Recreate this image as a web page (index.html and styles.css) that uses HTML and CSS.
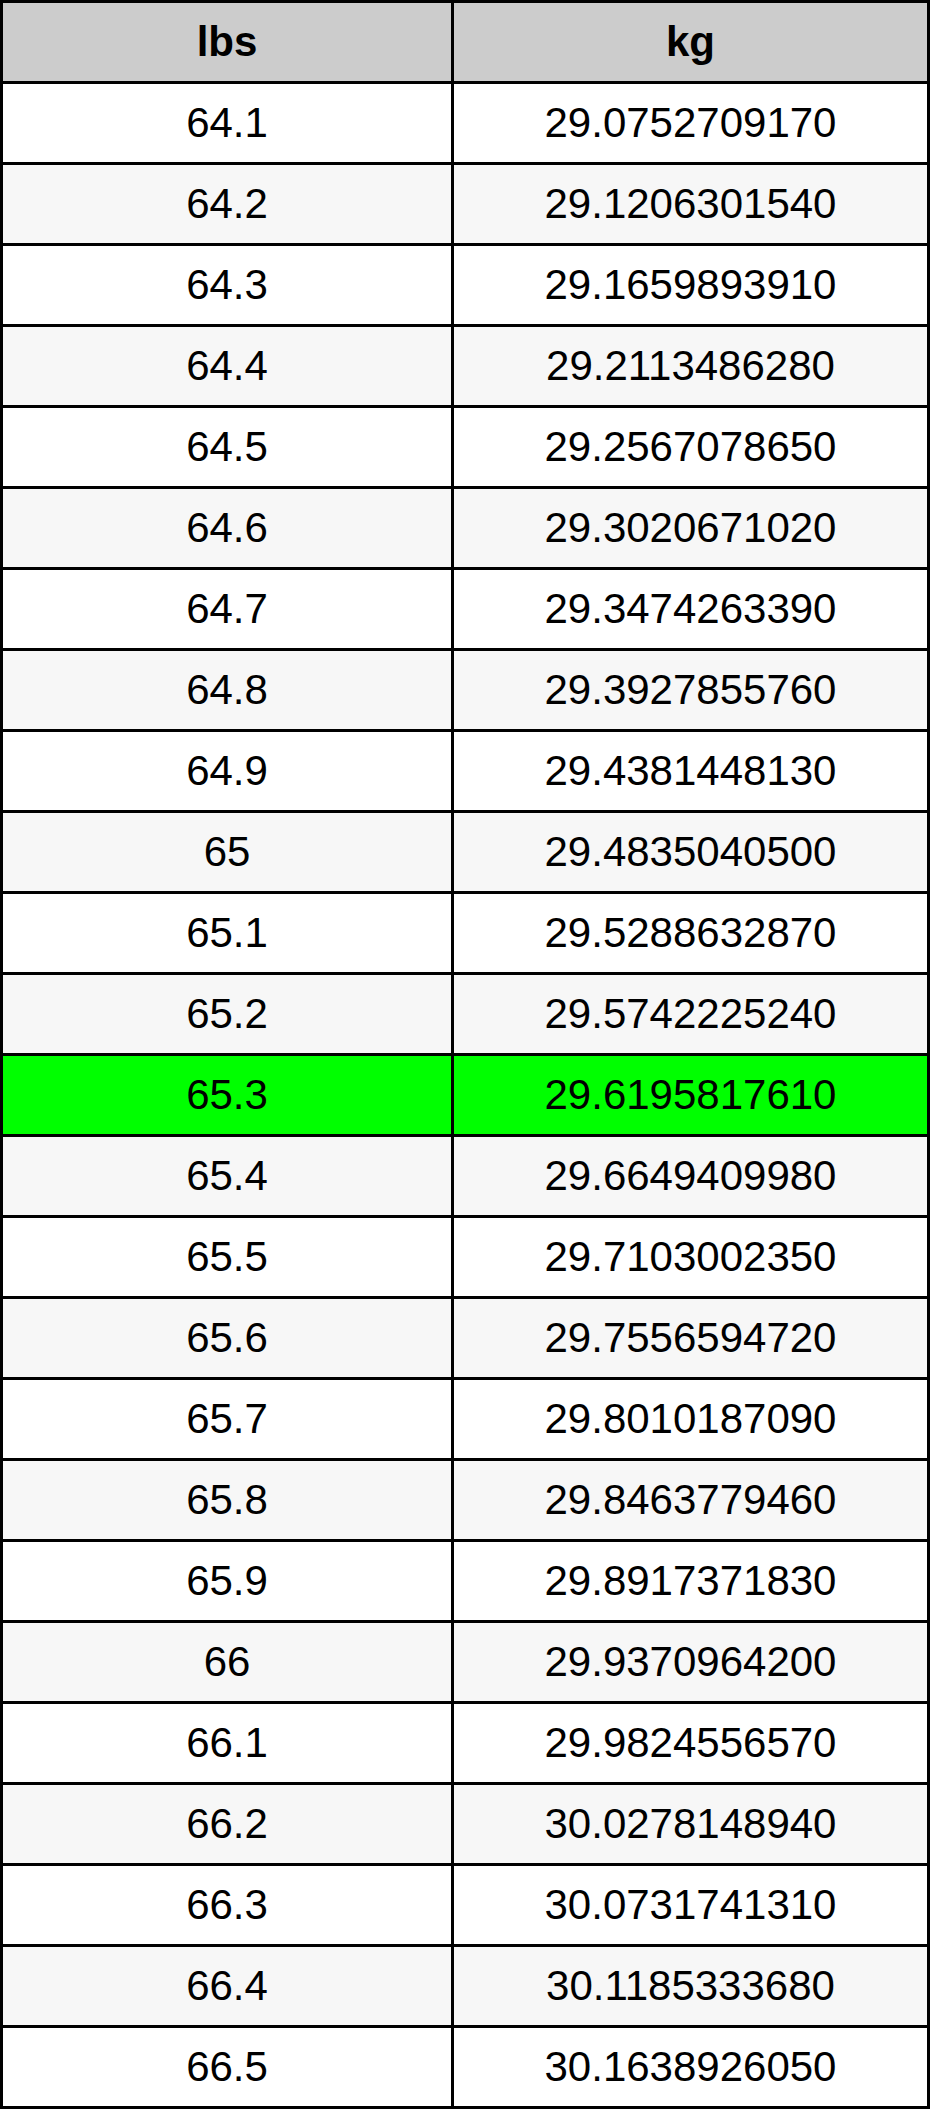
FILE: index.html
```html
<!DOCTYPE html>
<html>
<head>
<meta charset="utf-8">
<link rel="stylesheet" href="styles.css">
</head>
<body>
<table class="conv">
<thead>
<tr><th class="c1">lbs</th><th class="c2">kg</th></tr>
</thead>
<tbody>
<tr><td>64.1</td><td>29.0752709170</td></tr>
<tr><td>64.2</td><td>29.1206301540</td></tr>
<tr><td>64.3</td><td>29.1659893910</td></tr>
<tr><td>64.4</td><td>29.2113486280</td></tr>
<tr><td>64.5</td><td>29.2567078650</td></tr>
<tr><td>64.6</td><td>29.3020671020</td></tr>
<tr><td>64.7</td><td>29.3474263390</td></tr>
<tr><td>64.8</td><td>29.3927855760</td></tr>
<tr><td>64.9</td><td>29.4381448130</td></tr>
<tr><td>65</td><td>29.4835040500</td></tr>
<tr><td>65.1</td><td>29.5288632870</td></tr>
<tr><td>65.2</td><td>29.5742225240</td></tr>
<tr class="hl"><td>65.3</td><td>29.6195817610</td></tr>
<tr><td>65.4</td><td>29.6649409980</td></tr>
<tr><td>65.5</td><td>29.7103002350</td></tr>
<tr><td>65.6</td><td>29.7556594720</td></tr>
<tr><td>65.7</td><td>29.8010187090</td></tr>
<tr><td>65.8</td><td>29.8463779460</td></tr>
<tr><td>65.9</td><td>29.8917371830</td></tr>
<tr><td>66</td><td>29.9370964200</td></tr>
<tr><td>66.1</td><td>29.9824556570</td></tr>
<tr><td>66.2</td><td>30.0278148940</td></tr>
<tr><td>66.3</td><td>30.0731741310</td></tr>
<tr><td>66.4</td><td>30.1185333680</td></tr>
<tr><td>66.5</td><td>30.1638926050</td></tr>
</tbody>
</table>
</body>
</html>
```
FILE: styles.css
```css
html, body {
  margin: 0;
  padding: 0;
  background: #ffffff;
}
.conv {
  border-collapse: collapse;
  width: 930px;
  table-layout: fixed;
  font-family: "Liberation Sans", Arial, sans-serif;
  font-size: 42px;
  color: #000;
}
.conv th, .conv td {
  border: 3px solid #000;
  height: 78px;
  padding: 0;
  text-align: center;
  vertical-align: middle;
  box-sizing: content-box;
}
.conv th {
  background: #cccccc;
  font-weight: bold;
}
.conv .c1 { width: 448px; }
.conv .c2 { width: 473px; }
.conv tbody tr:nth-child(odd) td { background: #ffffff; }
.conv tbody tr:nth-child(even) td { background: #f7f7f7; }
.conv tbody tr.hl td { background: #00ff00; }
```
